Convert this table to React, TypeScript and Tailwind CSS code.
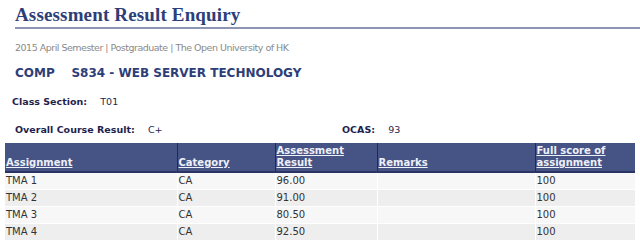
const rows = [
  { a: 'TMA 1', c: 'CA', r: '96.00', f: '100' },
  { a: 'TMA 2', c: 'CA', r: '91.00', f: '100' },
  { a: 'TMA 3', c: 'CA', r: '80.50', f: '100' },
  { a: 'TMA 4', c: 'CA', r: '92.50', f: '100' },
];

export default function App() {
  return (
    <div className="w-[640px] h-[249px] bg-white overflow-hidden font-['DejaVu_Sans',sans-serif]">
      {/* heading */}
      <div className="pl-[15px] pt-[5px]">
        <h1 className="font-['Liberation_Serif',serif] font-bold text-[19px] leading-[20px] tracking-[0.15px] text-[#2d3e78]">
          Assessment Result Enquiry
        </h1>
        <div className="mt-[2px] h-[2px] bg-[#8c95b3]" />
        <div className="mt-[12px] text-[9.5px] tracking-[-0.5px] leading-[14px] text-[#8a8a8a]">
          2015 April Semester | Postgraduate | The Open University of HK
        </div>
        <div className="mt-[11px] text-[12px] leading-[14px] font-bold text-[#2d3e78]">
          COMP&nbsp;&nbsp;&nbsp;&nbsp;S834 - WEB SERVER TECHNOLOGY
        </div>
      </div>

      <div className="pl-[12px] mt-[16px] text-[9.5px] leading-[12px] font-bold text-[#1f1f4d]">
        Class Section:&nbsp;&nbsp;&nbsp;&nbsp;<span className="font-normal">T01</span>
      </div>

      <div className="flex pl-[15px] mt-[16px] text-[9.5px] leading-[12px] font-bold text-[#1f1f4d]">
        <div className="w-[327px]">
          Overall Course Result:&nbsp;&nbsp;&nbsp;&nbsp;<span className="font-normal">C+</span>
        </div>
        <div>
          OCAS:&nbsp;&nbsp;&nbsp;&nbsp;<span className="font-normal">93</span>
        </div>
      </div>

      {/* results table */}
      <table className="ml-[5px] mt-[7px] w-[630px] border-collapse text-[10px] leading-[12px]">
        <thead>
          <tr className="h-[29px] bg-[#465385] text-[#eef0f8] font-bold align-bottom">
            {[
              ['Assignment', 'w-[172px]'],
              ['Category', 'w-[98px]'],
              ['Assessment Result', 'w-[102px]'],
              ['Remarks', 'w-[158px]'],
              ['Full score of assignment', ''],
            ].map(([t, w]) => (
              <th
                key={t}
                className={`${w} text-left font-bold px-[1px] pb-[2px] border-r border-[#1f2a5a] last:border-r-0 border-b-2 border-b-[#2a3566]`}
              >
                <span className="underline">{t}</span>
              </th>
            ))}
          </tr>
        </thead>
        <tbody className="text-[#333]">
          {rows.map((r, i) => (
            <tr key={r.a} className={`h-[17px] ${i % 2 === 0 ? 'bg-[#f7f7f7]' : 'bg-[#eeeeee]'}`}>
              <td className="px-[1px] border-r border-b border-white">{r.a}</td>
              <td className="px-[1px] border-r border-b border-white">{r.c}</td>
              <td className="px-[1px] border-r border-b border-white">{r.r}</td>
              <td className="px-[1px] border-r border-b border-white"></td>
              <td className="px-[1px] border-b border-white">{r.f}</td>
            </tr>
          ))}
        </tbody>
      </table>
    </div>
  );
}
